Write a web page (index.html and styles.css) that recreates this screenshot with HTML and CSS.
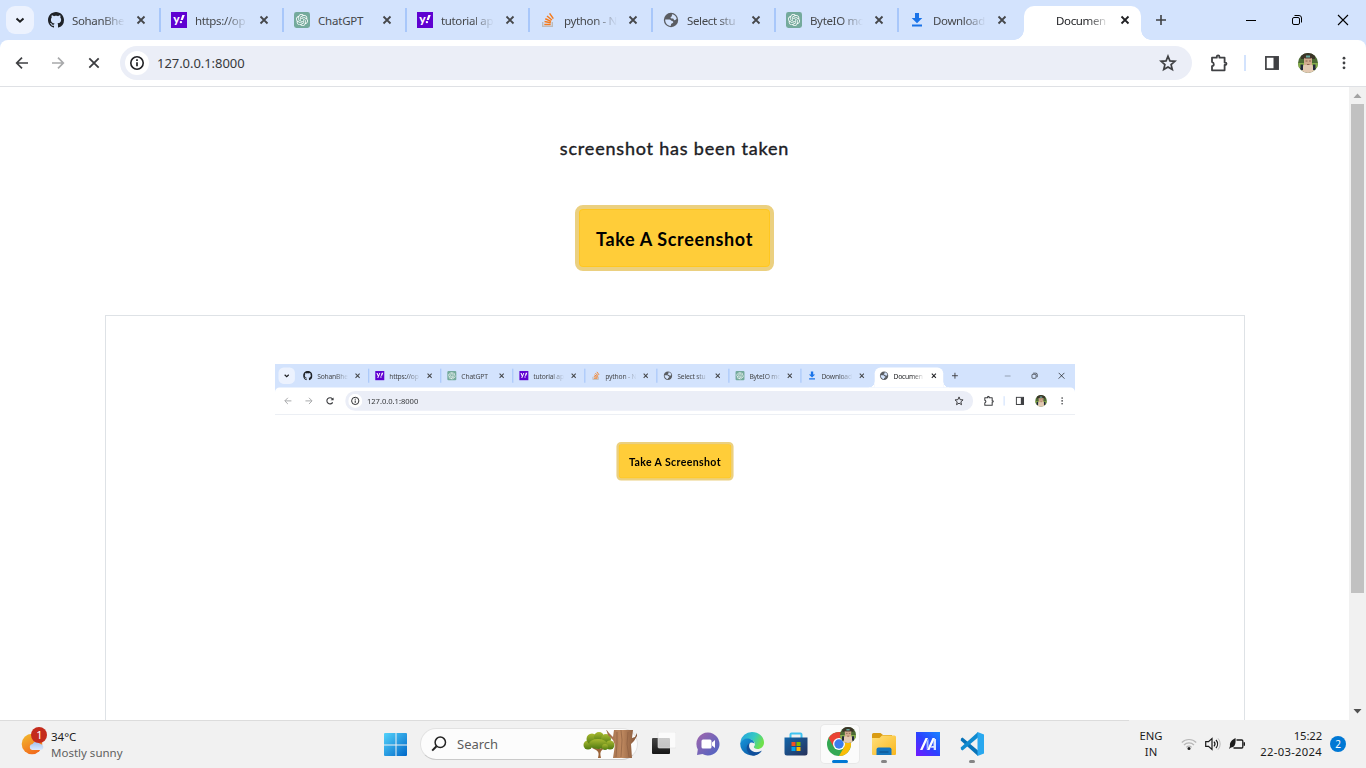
FILE: index.html
```html
<!DOCTYPE html>
<html lang="en">
<head>
<meta charset="utf-8">
<title>Document</title>
<link rel="stylesheet" href="styles.css">
</head>
<body>
<svg class="defs" width="0" height="0">
  <defs>
    <linearGradient id="g-win" x1="0" y1="0" x2="1" y2="1"><stop offset="0" stop-color="#54d3fb"/><stop offset="1" stop-color="#0067c8"/></linearGradient>
    <linearGradient id="g-sun" x1="0" y1="0" x2=".5" y2="1"><stop offset="0" stop-color="#f2bd2e"/><stop offset="1" stop-color="#f26d1c"/></linearGradient>
    <linearGradient id="g-cloud" x1="0" y1="0" x2="0" y2="1"><stop offset="0" stop-color="#a3c1ee"/><stop offset="1" stop-color="#dce9fc"/></linearGradient>
    <linearGradient id="g-chat" x1="0" y1="0" x2="1" y2="1"><stop offset="0" stop-color="#a267ac"/><stop offset="1" stop-color="#4b63c4"/></linearGradient>
    <linearGradient id="g-edge" x1="0" y1="0" x2="1" y2=".4"><stop offset="0" stop-color="#259fe2"/><stop offset=".6" stop-color="#35c9c4"/><stop offset="1" stop-color="#6ee04c"/></linearGradient>
    <linearGradient id="g-edge2" x1="0" y1="0" x2="1" y2="1"><stop offset="0" stop-color="#1597dc"/><stop offset="1" stop-color="#0c4a97"/></linearGradient>
    <linearGradient id="g-store" x1="0" y1="0" x2="1" y2="1"><stop offset="0" stop-color="#1266ab"/><stop offset="1" stop-color="#27315a"/></linearGradient>
    <linearGradient id="g-folder" x1="0" y1="0" x2="1" y2="1"><stop offset="0" stop-color="#ffe07c"/><stop offset="1" stop-color="#f9b71d"/></linearGradient>
    <linearGradient id="g-asus" x1="0" y1="1" x2="1" y2="0"><stop offset="0" stop-color="#7317ff"/><stop offset=".5" stop-color="#2b43ff"/><stop offset="1" stop-color="#1786ff"/></linearGradient>
    <linearGradient id="g-trunk" x1="0" y1="0" x2="1" y2="0"><stop offset="0" stop-color="#9a6844"/><stop offset=".5" stop-color="#c08a60"/><stop offset="1" stop-color="#805236"/></linearGradient>
    <linearGradient id="g-leaf" x1="0" y1="0" x2="0" y2="1"><stop offset="0" stop-color="#a9ba31"/><stop offset="1" stop-color="#4f7a10"/></linearGradient>
    <linearGradient id="g-dark" x1="0" y1="0" x2="0" y2="1"><stop offset="0" stop-color="#454545"/><stop offset="1" stop-color="#151515"/></linearGradient>
    <clipPath id="c-face"><circle cx="10" cy="10" r="10"/></clipPath>
  </defs>
  <symbol id="chev" viewBox="0 0 28 28"><path d="M10.5 12.400l3.500 3.300 3.500-3.300" fill="none" stroke="#1d1f22" stroke-width="2"/></symbol>
  <symbol id="github" viewBox="0 0 16 16"><path fill="#1f2328" fill-rule="evenodd" d="M8 0C3.58 0 0 3.58 0 8c0 3.54 2.29 6.53 5.47 7.59.4.07.55-.17.55-.38 0-.19-.01-.82-.01-1.49-2.01.37-2.53-.49-2.69-.94-.09-.23-.48-.94-.82-1.13-.28-.15-.68-.52-.01-.53.63-.01 1.08.58 1.23.82.72 1.21 1.87.87 2.33.66.07-.52.28-.87.51-1.07-1.78-.2-3.64-.89-3.64-3.95 0-.87.31-1.59.82-2.15-.08-.2-.36-1.02.08-2.12 0 0 .67-.21 2.2.82.64-.18 1.32-.27 2-.27s1.36.09 2 .27c1.53-1.04 2.2-.82 2.2-.82.44 1.1.16 1.92.08 2.12.51.56.82 1.27.82 2.15 0 3.07-1.87 3.75-3.65 3.95.29.25.54.73.54 1.48 0 1.07-.01 1.93-.01 2.2 0 .21.15.46.55.38A8.01 8.01 0 0 0 16 8c0-4.42-3.58-8-8-8z"/></symbol>
  <symbol id="yahoo" viewBox="0 0 16 16"><rect width="16" height="16" fill="#5f01d1"/><text x="2.200" y="10.800" class="yahoo-y">y</text><path d="M11.300 3h2.500l-2 5H9.600z" fill="#fff"/><circle cx="9.900" cy="10.100" r="1.200" fill="#fff"/></symbol>
  <symbol id="gpt" viewBox="0 0 16 16"><rect width="16" height="16" rx="2.400" fill="#74aa9c"/><path transform="translate(2 2) scale(.5)" fill="#fff" d="M22.2819 9.8211a5.9847 5.9847 0 0 0-.5157-4.9108 6.0462 6.0462 0 0 0-6.5098-2.9A6.0651 6.0651 0 0 0 4.9807 4.1818a5.9847 5.9847 0 0 0-3.9977 2.9 6.0462 6.0462 0 0 0 .7427 7.0966 5.98 5.98 0 0 0 .511 4.9107 6.051 6.051 0 0 0 6.5146 2.9001A5.9847 5.9847 0 0 0 13.2599 24a6.0557 6.0557 0 0 0 5.7718-4.2058 5.9894 5.9894 0 0 0 3.9977-2.9001 6.0557 6.0557 0 0 0-.7475-7.0729zm-9.022 12.6081a4.4755 4.4755 0 0 1-2.8764-1.0408l.1419-.0804 4.7783-2.7582a.7948.7948 0 0 0 .3927-.6813v-6.7369l2.02 1.1686a.071.071 0 0 1 .038.052v5.5826a4.504 4.504 0 0 1-4.4945 4.4944zm-9.6607-4.1254a4.4708 4.4708 0 0 1-.5346-3.0137l.142.0852 4.783 2.7582a.7712.7712 0 0 0 .7806 0l5.8428-3.3685v2.3324a.0804.0804 0 0 1-.0332.0615L9.74 19.9502a4.4992 4.4992 0 0 1-6.1408-1.6464zM2.3408 7.8956a4.485 4.485 0 0 1 2.3655-1.9728V11.6a.7664.7664 0 0 0 .3879.6765l5.8144 3.3543-2.0201 1.1685a.0757.0757 0 0 1-.071 0l-4.8303-2.7865A4.504 4.504 0 0 1 2.3408 7.872zm16.5963 3.8558L13.1038 8.364 15.1192 7.2a.0757.0757 0 0 1 .071 0l4.8303 2.7913a4.4944 4.4944 0 0 1-.6765 8.1042v-5.6772a.79.79 0 0 0-.407-.667zm2.0107-3.0231l-.142-.0852-4.7735-2.7818a.7759.7759 0 0 0-.7854 0L9.409 9.2297V6.8974a.0662.0662 0 0 1 .0284-.0615l4.8303-2.7866a4.4992 4.4992 0 0 1 6.6802 4.66zM8.3065 12.863l-2.02-1.1638a.0804.0804 0 0 1-.038-.0567V6.0742a4.4992 4.4992 0 0 1 7.3757-3.4537l-.142.0805L8.704 5.459a.7948.7948 0 0 0-.3927.6813zm1.0976-2.3654l2.602-1.4998 2.6069 1.4998v2.9994l-2.5974 1.4997-2.6067-1.4997Z"/></symbol>
  <symbol id="stack" viewBox="0 0 16 16"><path d="M2.700 10v4.400h9.600V10" fill="none" stroke="#bcbbbb" stroke-width="1.400"/><path d="M4.300 12.400h6.400M4.500 9.600l6.300 1.200M5.300 6.700l5.800 2.700M7 4l4.900 4M9.600 1.400l3.700 5.200" stroke="#f47a1c" stroke-width="1.500"/></symbol>
  <symbol id="globe" viewBox="0 0 16 16"><circle cx="8" cy="8" r="7.200" fill="#5a5d62"/><path d="M9.200 2.300c2.300.4 4 2 4.500 4.400-.8.700-1.300 1.700-2.300 1.500-.9-.2-.6-1.300-1.500-1.600-.8-.3-2 .1-2.300-.8-.2-.8 1.100-1.100 1.300-1.800.1-.6-.2-1.300.3-1.700zM2.200 7.400h4.200c1.400 0 1.600 1.300 2.700 1.600.9.200 1.300.8 1.100 1.600-.3.900-1.500.7-2 1.400-.4.600-.2 1.400-.6 1.900C4.500 13.500 2 11 2.200 7.400z" fill="#d3e3fd"/></symbol>
  <symbol id="down" viewBox="0 0 16 16"><path d="M6 1h4v5h3.300L8 11.200 2.700 6H6zM3 12.500h10v2H3z" fill="#1a73e8"/></symbol>
  <symbol id="x" viewBox="0 0 16 16"><path d="M4.500 4.500l7 7m0-7l-7 7" fill="none" stroke="currentColor" stroke-width="1.800"/></symbol>
  <symbol id="plus" viewBox="0 0 16 16"><path d="M8 3v10M3 8h10" fill="none" stroke="#3f4043" stroke-width="1.600"/></symbol>
  <symbol id="back" viewBox="0 0 16 16"><path d="M14 8H3m5-5.300L2.700 8 8 13.300" fill="none" stroke="currentColor" stroke-width="1.700"/></symbol>
  <symbol id="fwd" viewBox="0 0 16 16"><path d="M2 8h11M8 2.700L13.300 8 8 13.300" fill="none" stroke="currentColor" stroke-width="1.700"/></symbol>
  <symbol id="stop" viewBox="0 0 16 16"><path d="M3.300 3.300l9.400 9.400m0-9.400l-9.400 9.400" fill="none" stroke="#3c3d40" stroke-width="1.800"/></symbol>
  <symbol id="reload" viewBox="0 0 16 16"><path d="M12.500 10.500A5.300 5.300 0 1 1 12 4.500l1 1.200" fill="none" stroke="#3c3d40" stroke-width="1.900"/><path d="M14 2v5H9z" fill="#3c3d40"/></symbol>
  <symbol id="info" viewBox="0 0 24 24"><circle cx="12" cy="12" r="12" fill="#fff"/><circle cx="12" cy="12" r="6.200" fill="none" stroke="#202124" stroke-width="1.600"/><path d="M12 11.300v4M12 8.300v1.700" stroke="#202124" stroke-width="1.700"/></symbol>
  <symbol id="star" viewBox="0 0 18 18"><path d="M9 2.200l1.900 4.700 5 .4-3.800 3.300 1.200 4.900L9 12.900l-4.300 2.600 1.200-4.900-3.800-3.300 5-.4z" fill="none" stroke="#3f4043" stroke-width="1.700"/></symbol>
  <symbol id="puzzle" viewBox="0 0 18 18"><path d="M2 3.700h4.800V2.600a1.300 1.300 0 0 1 2.600 0v1.100h5.200v4.900h.7a1.200 1.200 0 0 1 0 2.400h-.7v5.300H2v-4.200c2.400-.2 2.400-3.700 0-4z" fill="none" stroke="#3f4043" stroke-width="1.800" stroke-linejoin="round"/></symbol>
  <symbol id="panel" viewBox="0 0 16 16"><rect x="1.900" y="1.900" width="12.200" height="12.200" fill="none" stroke="#3f4043" stroke-width="1.700"/><path d="M9.500 2H14v12H9.500z" fill="#3f4043"/></symbol>
  <symbol id="face" viewBox="0 0 20 20"><g clip-path="url(#c-face)"><path fill="#4c6a33" d="M0 0h20v20H0z"/><path fill="#3a3527" d="M3 0h14v6H3z"/><path fill="#86ad4b" d="M0 10h20v5H0z"/><path fill="#d2ab8e" d="M6 5h8v9H6z"/><path fill="#e3c9b2" d="M5.500 12h9l2 8h-13z"/><path fill="#4a382b" d="M6.500 3h7v2.500h-7z"/><path fill="#68a99d" d="M8 2.500h4V4.500H8z"/><path fill="#22283c" d="M2.500 11.500h2.500V17H2.500zM15 11.500h2.500V17H15z"/><path stroke="#7c5242" stroke-width=".8" d="M7.500 8h2m1.500 0h2M9 11.500h2.500"/></g></symbol>
  <symbol id="dots" viewBox="0 0 16 16"><g fill="#3f4043"><circle cx="8" cy="2.500" r="1.600"/><circle cx="8" cy="8" r="1.600"/><circle cx="8" cy="13.500" r="1.600"/></g></symbol>
  <symbol id="min" viewBox="0 0 12 12"><path d="M1 6.500h10" stroke="#000"/></symbol>
  <symbol id="max" viewBox="0 0 12 12"><g fill="none" stroke="#000"><rect x="1.500" y="3.500" width="7" height="7" rx="1.500"/><path d="M3.500 1.500H8a2.500 2.500 0 0 1 2.500 2.500v4.500"/></g></symbol>
  <symbol id="close" viewBox="0 0 12 12"><path d="M1 1l10 10m0-10L1 11" stroke="#000" stroke-width="1.100"/></symbol>
</svg>

<div class="browser">
  <div class="tabs">
    <svg class="tab-search"><use href="#chev"/></svg>
    <div class="tab"><svg><use href="#github"/></svg><span>SohanBhe</span><svg class="x"><use href="#x"/></svg></div>
    <div class="tab"><svg><use href="#yahoo"/></svg><span>https://op</span><svg class="x"><use href="#x"/></svg></div>
    <div class="tab"><svg><use href="#gpt"/></svg><span class="full">ChatGPT</span><svg class="x"><use href="#x"/></svg></div>
    <div class="tab"><svg><use href="#yahoo"/></svg><span>tutorial ap</span><svg class="x"><use href="#x"/></svg></div>
    <div class="tab"><svg><use href="#stack"/></svg><span>python - N</span><svg class="x"><use href="#x"/></svg></div>
    <div class="tab"><svg><use href="#globe"/></svg><span>Select stu</span><svg class="x"><use href="#x"/></svg></div>
    <div class="tab"><svg><use href="#gpt"/></svg><span>ByteIO mo</span><svg class="x"><use href="#x"/></svg></div>
    <div class="tab last"><svg><use href="#down"/></svg><span>Download</span><svg class="x"><use href="#x"/></svg></div>
    <div class="tab active"><svg></svg><span>Documen</span><svg class="x"><use href="#x"/></svg></div>
    <svg class="new-tab"><use href="#plus"/></svg>
    <div class="controls"><svg><use href="#min"/></svg><svg><use href="#max"/></svg><svg><use href="#close"/></svg></div>
  </div>
  <div class="toolbar">
    <svg class="nav"><use href="#back"/></svg><svg class="nav off"><use href="#fwd"/></svg><svg class="nav"><use href="#stop"/></svg>
    <div class="address"><svg class="info"><use href="#info"/></svg><span>127.0.0.1:8000</span><svg class="star"><use href="#star"/></svg></div>
    <svg class="ext"><use href="#puzzle"/></svg><i class="rule"></i><svg class="side"><use href="#panel"/></svg><svg class="avatar"><use href="#face"/></svg><svg class="menu"><use href="#dots"/></svg>
  </div>
</div>

<div class="viewport">
  <main class="page">
    <p class="message">screenshot has been taken</p>
    <button class="shoot">Take A Screenshot</button>
    <section class="card">
      <div class="shot">
        <div class="shot-inner">
          <div class="browser">
            <div class="tabs">
              <svg class="tab-search"><use href="#chev"/></svg>
              <div class="tab"><svg><use href="#github"/></svg><span>SohanBhe</span><svg class="x"><use href="#x"/></svg></div>
              <div class="tab"><svg><use href="#yahoo"/></svg><span>https://op</span><svg class="x"><use href="#x"/></svg></div>
              <div class="tab"><svg><use href="#gpt"/></svg><span class="full">ChatGPT</span><svg class="x"><use href="#x"/></svg></div>
              <div class="tab"><svg><use href="#yahoo"/></svg><span>tutorial ap</span><svg class="x"><use href="#x"/></svg></div>
              <div class="tab"><svg><use href="#stack"/></svg><span>python - N</span><svg class="x"><use href="#x"/></svg></div>
              <div class="tab"><svg><use href="#globe"/></svg><span>Select stu</span><svg class="x"><use href="#x"/></svg></div>
              <div class="tab"><svg><use href="#gpt"/></svg><span>ByteIO mo</span><svg class="x"><use href="#x"/></svg></div>
              <div class="tab last"><svg><use href="#down"/></svg><span>Download</span><svg class="x"><use href="#x"/></svg></div>
              <div class="tab active"><svg><use href="#globe"/></svg><span>Documen</span><svg class="x"><use href="#x"/></svg></div>
              <svg class="new-tab"><use href="#plus"/></svg>
              <div class="controls"><svg class="faint"><use href="#min"/></svg><svg><use href="#max"/></svg><svg><use href="#close"/></svg></div>
            </div>
            <div class="toolbar">
              <svg class="nav off"><use href="#back"/></svg><svg class="nav off"><use href="#fwd"/></svg><svg class="nav"><use href="#reload"/></svg>
              <div class="address"><svg class="info"><use href="#info"/></svg><span>127.0.0.1:8000</span><svg class="star"><use href="#star"/></svg></div>
              <svg class="ext"><use href="#puzzle"/></svg><i class="rule"></i><svg class="side"><use href="#panel"/></svg><svg class="avatar"><use href="#face"/></svg><svg class="menu"><use href="#dots"/></svg>
            </div>
          </div>
          <div class="shot-body"><button class="shoot">Take A Screenshot</button></div>
        </div>
      </div>
    </section>
  </main>
  <div class="scrollbar">
    <svg width="17" height="17"><path d="M4.500 11h8l-4-4.500z" fill="#a3a3a3"/></svg>
    <div class="thumb"></div>
    <svg class="arrow-down" width="17" height="17"><path d="M4.500 6h8l-4 4.500z" fill="#505050"/></svg>
  </div>
</div>

<footer class="taskbar">
  <div class="weather">
    <svg width="26" height="30"><circle cx="11" cy="17" r="10.300" fill="url(#g-sun)"/><path d="M11 23a3 3 0 0 1 .5-5.900 4.200 4.200 0 0 1 7.500 0A3 3 0 0 1 20 23z" fill="url(#g-cloud)"/><circle cx="18" cy="8" r="8" fill="#c42b1c"/><text x="15.300" y="12" class="count">1</text></svg>
    <div class="lines"><span>34°C</span><span class="dim">Mostly sunny</span></div>
  </div>
  <div class="apps">
    <svg class="start" width="24" height="24"><path fill="url(#g-win)" d="M1 0h10.500v11.500H0V1a1 1 0 0 1 1-1zM12.500 0H22a1 1 0 0 1 1 1v10.500H12.500zM0 12.500h11.500V23H1a1 1 0 0 1-1-1zM12.500 12.500H23V22a1 1 0 0 1-1 1H12.500z"/></svg>
    <div class="search">
      <svg width="16" height="16"><circle cx="9.300" cy="6.300" r="5.200" fill="none" stroke="#222" stroke-width="1.500"/><path d="M5.500 10.200L1.200 14.600" stroke="#222" stroke-width="2"/></svg>
      <span>Search</span>
      <svg class="tree" width="54" height="28"><path d="M15 28c1-4 1-6-2-8l-4-2 1-1 5 2 1-3 1 3 5-3 1 1-4 3c-2 2-2 4-1 8z" fill="#9a6339"/><g fill="url(#g-leaf)"><circle cx="5" cy="15" r="4.500"/><circle cx="9" cy="9" r="5.500"/><circle cx="16" cy="7" r="5"/><circle cx="23" cy="9" r="5"/><circle cx="27" cy="15" r="4.500"/><ellipse cx="15" cy="14" rx="9" ry="5"/><circle cx="22" cy="17" r="3"/></g><path d="M31 0h19l-1 8 3-1 2-4v3l-3 5-3 3 1 14H30l2-13-2-5-5-5-2-6 3 4 4 4z" fill="url(#g-trunk)"/><path d="M34 2v11l-1 14M38 0l1 10-1 17M45 2l-1 12 2 13" stroke="#8c5f40" fill="none" stroke-width=".7"/></svg>
    </div>
    <div class="app"><svg width="24" height="24"><rect y="6" width="18" height="16" rx="1" fill="url(#g-dark)"/><rect x="6" width="18" height="16" rx="1" fill="#fff" fill-opacity=".72" stroke="#e3e3e3" stroke-width=".6"/></svg></div>
    <div class="app"><svg width="24" height="24"><path d="M12 .5a11.500 11.500 0 1 1-5.500 21.600L1 23l.8-5.500A11.500 11.500 0 0 1 12 .5z" fill="url(#g-chat)"/><rect x="5.500" y="7.500" width="10" height="9" rx="1.500" fill="#fff"/><path d="M16 10.500l3-2.500v8l-3-2.500z" fill="#fff"/></svg></div>
    <div class="app"><svg width="24" height="24"><path d="M.3 10A11.800 11.800 0 0 1 12 0c6.500 0 12 4.500 12 10.500 0 4-3 6.500-6.500 6.500-3 0-4-1.200-3.500-2.500 2.500-3-.5-7-5-7.500C5 6.500 2 8 .3 10z" fill="url(#g-edge)"/><path d="M.2 11C1.500 7.500 5 6 8.500 6.500c3.500.5 5.700 2.500 6 5-4-3-8 1-6 5.500 2 4 7.500 5 12.500 2.500A12 12 0 0 1 .2 11z" fill="url(#g-edge2)"/><path d="M8.800 11.500C4 16 8 23 14 23.700A12 12 0 0 0 22 18.500c-5 3-10 1.500-12-1.500-1.200-2-1.200-4-.2-6z" fill="#104f9b"/></svg></div>
    <div class="app"><svg width="24" height="24"><path d="M6.500 7V2.500a1 1 0 0 1 1-1h9a1 1 0 0 1 1 1V7" fill="none" stroke="#3fc3f1" stroke-width="2"/><path d="M.5 5.500h23V21a2.500 2.500 0 0 1-2.500 2.500H3A2.500 2.500 0 0 1 .5 21z" fill="url(#g-store)"/><path fill="#f25022" d="M7.500 10h4v4h-4z"/><path fill="#7fba00" d="M12.500 10h4v4h-4z"/><path fill="#00a4ef" d="M7.500 15h4v4h-4z"/><path fill="#ffb900" d="M12.500 15h4v4h-4z"/></svg></div>
    <div class="app open"><svg width="32" height="32"><circle cx="13" cy="19" r="12" fill="#34a853"/><path d="M2.600 13A12 12 0 0 1 23.400 13H13l-5.200 9z" fill="#ea4335"/><path d="M13 13h10.400A12 12 0 0 1 13 31l5.200-9z" fill="#fbbc05"/><circle cx="13" cy="19" r="6" fill="#fff"/><circle cx="13" cy="19" r="4.700" fill="#3b7ded"/><svg x="14" y="2" width="16" height="16"><use href="#face"/></svg></svg></div>
    <div class="app run"><svg width="24" height="24"><path d="M0 2.500a1.500 1.500 0 0 1 1.500-1.500h7L11 3h9v5H0z" fill="#d99b13"/><path d="M0 6h7.500L10 3.500h12.500A1.500 1.500 0 0 1 24 5v17a1 1 0 0 1-1 1H1a1 1 0 0 1-1-1z" fill="url(#g-folder)"/><path d="M4.500 23v-5.500a2 2 0 0 1 2-2h11a2 2 0 0 1 2 2V23z" fill="#1475bd"/><path d="M7.500 20h9" stroke="#0b4d86" stroke-width="1"/></svg></div>
    <div class="app"><svg width="24" height="24"><path fill="url(#g-asus)" d="M0 0h24v24H0z"/><path d="M9.500 6H12L6.500 18H4zM16.500 6H19l-5.500 12H11z" fill="#fff"/><path d="M10.500 9.500l2-2.500v8l-1.800 3z" fill="#a9c2ff"/><path d="M17.500 7H20v11h-2.300v-2.300h-3l.8-1.700h2z" fill="#dbe6ff"/></svg></div>
    <div class="app run"><svg width="24" height="24"><path d="M1 6.500l1.500-1L18 18.500V24L.7 8.500z" fill="#0873b8"/><path d="M1 17.500l1.500 1L18 5.500V0L.7 15.500z" fill="#108bd0"/><path d="M17.500 0L24 2.500v19L17.500 24z" fill="#29a8ef"/></svg></div>
  </div>
  <div class="tray">
    <div class="lang"><span>ENG</span><span>IN</span></div>
    <svg class="wifi" width="16" height="14"><g fill="none" stroke="#b7b7b7" stroke-width="1.200"><path d="M.8 5.500a10.200 10.200 0 0 1 14.400 0M3 8a7 7 0 0 1 10 0M5.300 10.300a3.800 3.800 0 0 1 5.400 0"/></g><circle cx="8" cy="11.500" r="1.500" fill="#222"/></svg>
    <svg class="sound" width="16" height="14"><path d="M.7 4.700h2.800L7 1.500v11L3.500 9.300H.7z" fill="none" stroke="#1b1b1b" stroke-width="1.200"/><path d="M9 4.700a3.500 3.500 0 0 1 0 4.600M11 3a6 6 0 0 1 0 8" fill="none" stroke="#1b1b1b" stroke-width="1.200"/><path d="M13 1.300a8.500 8.500 0 0 1 0 11.400" fill="none" stroke="#bbb"/></svg>
    <svg class="battery" width="17" height="14"><path d="M7.500 3h5.300a1 1 0 0 1 1 1v6a1 1 0 0 1-1 1H4.500" fill="none" stroke="#1b1b1b" stroke-width="1.300"/><path d="M14.500 5.300H16v3.400h-1.500z" fill="#1b1b1b"/><path d="M6.500 1C3 3 .5 5 1 9l-1 3 2-1.500c4 0 5-4 4.500-9.500z" fill="#1b1b1b"/></svg>
    <div class="clock"><span>15:22</span><span>22-03-2024</span></div>
    <div class="notice">2</div>
  </div>
</footer>
</body>
</html>
```

FILE: styles.css
```css
* { box-sizing: border-box; }
body {
  margin: 0;
  width: 1366px;
  height: 768px;
  overflow: hidden;
  display: flex;
  flex-direction: column;
  background: #fff;
  font-family: "Noto Sans", "Open Sans", sans-serif;
  color: #1b1b1b;
}
svg { display: block; flex: none; }
.defs { position: absolute; top: 0; left: 0; }
.yahoo-y { font: 900 12px Lato, sans-serif; fill: #fff; }

/* Browser window frame */
.browser { width: 1366px; height: 87px; flex: none; background: #d3e3fd; }
.tabs { height: 40px; display: flex; align-items: center; padding-left: 6px; }
.tab-search { width: 28px; height: 28px; border-radius: 9px; background: #ecf2fe; margin-right: 4px; }
.tab {
  width: 123px;
  height: 24px;
  flex: none;
  display: flex;
  align-items: center;
  padding-left: 10px;
  border-right: 2px solid #a8c7fa;
  color: #45474a;
}
.tab svg { width: 16px; height: 16px; }
.tab span {
  width: 53px;
  margin: 1px 8px 0 8px;
  white-space: nowrap;
  font-size: 11.500px;
  line-height: 20px;
  letter-spacing: -0.35px;
  -webkit-mask-image: linear-gradient(90deg, #000 58%, transparent 100%);
  mask-image: linear-gradient(90deg, #000 58%, transparent 100%);
}
.tab .full { -webkit-mask-image: none; mask-image: none; letter-spacing: -0.2px; }
.tab.last { border-right-color: transparent; }
.tab.active {
  position: relative;
  width: 117px;
  height: 34px;
  margin: 6px 0 0 2px;
  padding: 0 0 6px 8px;
  border: 0;
  border-radius: 10px 10px 0 0;
  background: #fff;
  color: #202124;
}
.tab.active::before, .tab.active::after {
  content: "";
  position: absolute;
  bottom: 0;
  width: 10px;
  height: 10px;
}
.tab.active::before { left: -10px; background: radial-gradient(circle at 0 0, transparent 9.500px, #fff 10px); }
.tab.active::after { right: -10px; background: radial-gradient(circle at 100% 0, transparent 9.500px, #fff 10px); }
.new-tab { width: 16px; height: 16px; margin-left: 12px; }
.controls { display: flex; gap: 34px; margin: 0 17px 0 auto; }
.controls svg { width: 12px; height: 12px; }
.controls .faint { opacity: 0.5; }
.toolbar {
  height: 47px;
  display: flex;
  align-items: center;
  padding-left: 14px;
  background: #fff;
  border-bottom: 1px solid #dfe1e5;
  border-radius: 8px 8px 0 0;
}
.nav { width: 16px; height: 16px; margin-right: 20px; color: #3f4043; }
.nav.off { color: #a8a9ab; }
.address {
  width: 1072px;
  height: 34px;
  margin-left: -2px;
  display: flex;
  align-items: center;
  padding: 0 15px 0 5px;
  border-radius: 17px;
  background: #ebeef7;
}
.info { width: 24px; height: 24px; }
.address span { margin-left: 8px; font-size: 13px; letter-spacing: -0.05px; color: #36383b; }
.star { width: 18px; height: 18px; margin-left: auto; }
.ext { width: 18px; height: 18px; margin-left: 18px; }
.rule { width: 2px; height: 16px; margin-left: 16px; background: #d3e3fd; }
.side { width: 16px; height: 16px; margin-left: 18px; }
.avatar { width: 20px; height: 20px; margin-left: 18px; }
.menu { width: 16px; height: 14px; margin-left: 18px; }

/* Web page */
.viewport { height: 633px; display: flex; overflow: hidden; }
.page { width: 1349px; display: flex; flex-direction: column; align-items: center; padding-top: 47px; }
.message {
  margin: 0;
  height: 28px;
  line-height: 28px;
  font-family: Lato, sans-serif;
  font-weight: 400;
  font-size: 18px;
  letter-spacing: 0.8px;
  color: #1c2024;
  -webkit-text-stroke: 0.4px #1c2024;
}
.shoot {
  flex: none;
  width: 199px;
  height: 66px;
  margin: 43px 0 44px;
  padding: 1px 0 0;
  border: 4px solid #ebd080;
  border-radius: 8px;
  background: #ffcd39;
  box-shadow: inset 0 0 0 1px #ffc720;
  font-family: Lato, sans-serif;
  font-weight: 700;
  font-size: 18px;
  letter-spacing: 0.65px;
  color: #000;
}
.card {
  flex: none;
  width: 1140px;
  height: 600px;
  margin-left: 1px;
  padding: 48px 169px;
  border: 1px solid #dee2e6;
}
.shot { width: 800px; height: 450px; overflow: hidden; }
.shot-inner { width: 1366px; height: 768px; transform: scale(0.58565); transform-origin: 0 0; }
.shot-body { display: flex; justify-content: center; padding-top: 46px; }
.shot-body .shoot { margin: 0; width: 200px; }
.scrollbar { width: 17px; display: flex; flex-direction: column; background: #f1f1f1; }
.thumb { width: 13px; height: 489px; margin-left: 2px; background: #c1c1c1; }
.arrow-down { margin-top: auto; }

/* Taskbar */
.taskbar {
  height: 48px;
  display: grid;
  grid-template-columns: 384px 610px 1fr;
  background: linear-gradient(#dcdcdc, #dcdcdc) 0 0 / 1129px 1px no-repeat #f1f1f1;
}
.weather { display: flex; padding: 7px 0 0 21px; }
.lines { display: flex; flex-direction: column; margin-left: 4px; font-size: 11.500px; line-height: 16px; padding-top: 2px; }
.dim { color: #5f5f5f; }
.count { font: 11px "Noto Sans", sans-serif; fill: #fff; }
.apps { display: flex; align-items: center; }
.start { margin-top: 1px; }
.search {
  width: 218px;
  height: 32px;
  flex: none;
  margin: 0 6px 0 12px;
  padding: 0 0 0 10px;
  display: flex;
  align-items: center;
  border: 1px solid #e2e2e2;
  border-bottom-color: #cacaca;
  border-radius: 16px;
  background: #fcfcfc;
}
.search span { margin-left: 10px; font-size: 13px; color: #5d5d5d; }
.tree { margin-left: auto; }
.app {
  width: 38px;
  height: 38px;
  margin-right: 6px;
  flex: none;
  display: flex;
  align-items: center;
  justify-content: center;
  position: relative;
}
.search + .app { margin-left: 1px; }
.app.open { background: #fbfbfb; border-radius: 4px; box-shadow: 0 0 0 1px #e8e8e8; }
.app.open svg { margin: -7px 0 0 3px; }
.app.open svg svg { margin: 0; }
.app.open::after, .app.run::after {
  content: "";
  position: absolute;
  bottom: 0;
  left: 16px;
  width: 6px;
  height: 3px;
  border-radius: 2px;
  background: #858585;
}
.app.open::after { left: 11px; width: 16px; background: #0078d4; }
.tray { display: flex; align-items: center; padding-right: 20px; font-size: 11.250px; line-height: 16px; }
.lang, .clock { display: flex; flex-direction: column; }
.lang { align-items: center; width: 30px; margin-left: 142px; }
.wifi { margin-left: 15px; }
.sound { margin-left: 8px; }
.battery { margin-left: 8px; }
.clock { align-items: flex-end; margin-left: auto; letter-spacing: 0.3px; }
.clock span:first-child { letter-spacing: -0.1px; }
.notice { width: 16px; height: 16px; margin-left: 8px; border-radius: 50%; background: #0078d4; color: #fff; font-size: 10px; line-height: 16px; text-align: center; }
```
